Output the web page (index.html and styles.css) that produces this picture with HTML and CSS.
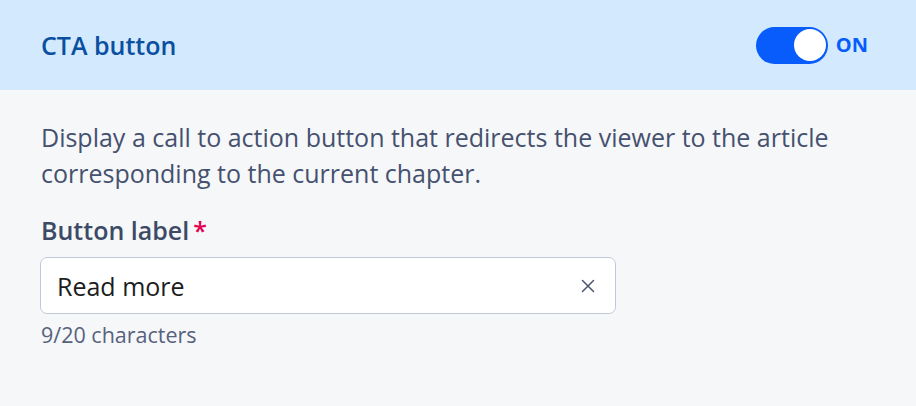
FILE: index.html
```html
<!DOCTYPE html>
<html lang="en">
<head>
<meta charset="utf-8">
<title>CTA button</title>
<link rel="stylesheet" href="styles.css">
</head>
<body>
<div class="panel">
  <header class="head">
    <h2 class="title">CTA button</h2>
    <label class="switch">
      <span class="track"><span class="knob"></span></span>
      <span class="state">ON</span>
    </label>
  </header>
  <section class="body">
    <p class="desc">Display a call to action button that redirects the viewer to the article corresponding to the current chapter.</p>
    <div class="field">
      <div class="label">Button label<span class="req">*</span></div>
      <div class="input">
        <span class="value">Read more</span>
        <svg class="clear" width="14" height="14" viewBox="0 0 14 14" aria-hidden="true">
          <path d="M1.5 1.5 L12.5 12.5 M12.5 1.5 L1.5 12.5" stroke="#4a5570" stroke-width="1.5" stroke-linecap="round" fill="none"/>
        </svg>
      </div>
      <div class="help">9/20 characters</div>
    </div>
  </section>
</div>
</body>
</html>
```

FILE: styles.css
```css
* { box-sizing: border-box; }
html, body { margin: 0; padding: 0; }
body {
  font-family: "Open Sans", "Noto Sans", sans-serif;
  background: #f6f7f9;
  width: 916px;
  height: 406px;
  overflow: hidden;
}
.panel { display: flex; flex-direction: column; }
.head {
  height: 90px;
  background: #d3e9fe;
  display: flex;
  align-items: center;
  justify-content: space-between;
  padding: 0 48px 0 41px;
}
.title {
  margin: 0;
  font-size: 25px;
  font-weight: 600;
  color: #0a4fa0;
  line-height: 1;
}
.switch { display: flex; align-items: center; gap: 8px; }
.track {
  width: 72px;
  height: 37px;
  border-radius: 19px;
  background: #075cfb;
  display: flex;
  align-items: center;
  justify-content: flex-end;
  padding-right: 2px;
}
.knob {
  width: 32px;
  height: 32px;
  border-radius: 50%;
  background: #fff;
}
.state {
  font-size: 20px;
  font-weight: 700;
  color: #075cfb;
  line-height: 1;
}
.body { padding: 29px 41px 0 41px; }
.desc {
  margin: 0;
  font-size: 25px;
  line-height: 36px;
  color: #45516e;
}
.field { margin-top: 24px; }
.label {
  font-size: 25px;
  font-weight: 600;
  color: #3d4a66;
  line-height: 30px;
}
.req { color: #e5004f; margin-left: 4px; }
.input {
  margin-top: 12px;
  margin-left: -1px;
  width: 576px;
  height: 57px;
  background: #fff;
  border: 1px solid #c1c9d8;
  border-radius: 7px;
  display: flex;
  align-items: center;
  justify-content: space-between;
  padding: 0 20px 0 16px;
}
.value { font-size: 25px; color: #1c1d21; }
.clear { display: block; }
.help {
  margin-top: 7px;
  font-size: 21.5px;
  color: #56627d;
  line-height: 28px;
}
```
